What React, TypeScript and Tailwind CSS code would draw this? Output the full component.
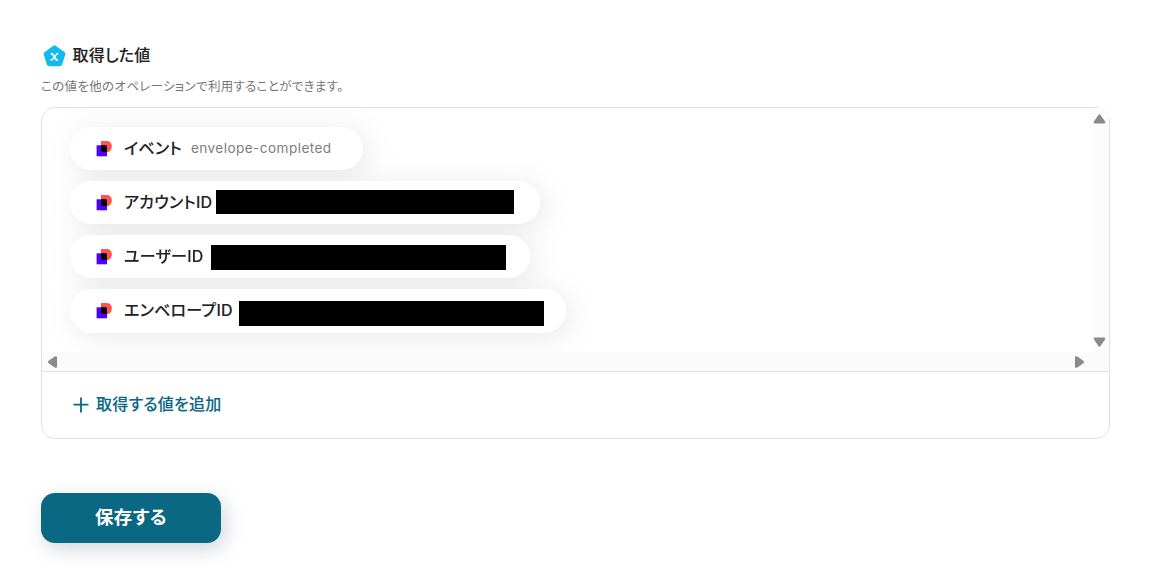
import type { ReactNode } from 'react';

type OutputValue = {
  label: string;
  value?: string;
  size: string;
  mask?: string;
};

const values: OutputValue[] = [
  { label: 'イベント', value: 'envelope-completed', size: 'w-[293px] h-[43px]' },
  { label: 'アカウントID', size: 'w-[470px] h-[43px]', mask: 'left-[146px] top-[9px] w-[298px] h-[24px]' },
  { label: 'ユーザーID', size: 'w-[460px] h-[43px]', mask: 'left-[141px] top-[10px] w-[295px] h-[25px]' },
  { label: 'エンベロープID', size: 'w-[496px] h-[44px]', mask: 'left-[169px] top-[12px] w-[305px] h-[25px]' },
];

function PentagonIcon() {
  return (
    <svg width="23" height="22" viewBox="0 0 23 22" className="shrink-0">
      <path
        d="M10 .9a2.5 2.5 0 0 1 3 0l8.3 6a2.5 2.5 0 0 1 .9 2.8l-3.1 9.7a2.5 2.5 0 0 1-2.4 1.8H6.3a2.5 2.5 0 0 1-2.4-1.8L.8 9.7a2.5 2.5 0 0 1 .9-2.8z"
        fill="#10b9ee"
      />
      <path d="M7.6 8.8h1.7l4 6h1.9" fill="none" stroke="#fff" strokeWidth="1.8" />
      <path d="M15.3 8.8h-1.4l-4.6 6H7.4" fill="none" stroke="#fff" strokeWidth="1.4" />
    </svg>
  );
}

function DocIcon() {
  return (
    <svg width="16" height="16" viewBox="0 0 16 16" className="shrink-0">
      <path d="M5 0h5.8a5 5 0 0 1 5 5c0 3.5-1.8 6-4.4 6H5z" fill="#ff5252" />
      <path d="M.6 4.3H11v11H.6z" fill="#4c00ff" />
      <path d="M5 4.3h3.5A2.5 2.5 0 0 1 11 6.8V11H7a2 2 0 0 1-2-2z" fill="#000" />
    </svg>
  );
}

function Arrow({ className }: { className: string }) {
  return (
    <svg width="13" height="10" viewBox="0 0 14 10" preserveAspectRatio="none" className={className}>
      <path d="M6 .8a1.3 1.3 0 0 1 2 0l4.8 6.4c.8 1.1.3 2.4-1 2.4H2.2c-1.3 0-1.8-1.3-1-2.4z" fill="#8b8b8b" />
    </svg>
  );
}

function ValuePill({ item, children }: { item: OutputValue; children?: ReactNode }) {
  return (
    <li className={`relative flex items-center rounded-full bg-white pl-[26px] ${item.size}`}>
      <DocIcon />
      <span className="ml-3 pb-[2px] text-[16px] leading-6 font-medium tracking-[0.25px] text-[#222] [-webkit-text-stroke:0.1px_#222]">{item.label}</span>
      {item.value && <span className="ml-[9px] pb-px text-[13.6px] leading-5 tracking-[0.43px] text-[#7d7d7d]">{item.value}</span>}
      {children}
    </li>
  );
}

export default function App() {
  return (
    <main className="h-[577px] w-[1156px] overflow-hidden bg-white pt-[44px] pl-[41px] font-['Inter','Noto_Sans_CJK_JP',sans-serif] [font-feature-settings:'palt']">
      <header>
        <div className="flex h-[23px] items-center gap-[6.5px] pl-[2px]">
          <PentagonIcon />
          <h1 className="pb-[2px] text-[16px] leading-6 font-medium tracking-[0.25px] text-[#222] [-webkit-text-stroke:0.1px_#222]">取得した値</h1>
        </div>
        <p className="mt-[11px] h-[29px] text-[12.5px] leading-[18px] tracking-[0.33px] text-[#777]">この値を他のオペレーションで利用することができます。</p>
      </header>

      <section className="h-[332px] w-[1069px] rounded-[14px] border border-[#e2e2e2]">
        <div className="grid h-[264px] grid-cols-[1048px_19px] grid-rows-[244px_19px] border-b border-[#e2e2e2]">
          <div className="overflow-hidden rounded-tl-[13px] pt-[19px] pl-[28px]">
            <ul className="flex flex-col gap-[11px] drop-shadow-[4px_4px_14px_rgba(0,0,0,0.09)]">
              {values.map((item) => (
                <ValuePill key={item.label} item={item}>
                  {item.mask && <span className={`absolute bg-black ${item.mask}`} />}
                </ValuePill>
              ))}
            </ul>
          </div>
          {/* Scrollbars */}
          <div className="flex flex-col items-center justify-between bg-[#fcfcfc] pt-[6px] pb-[5px]">
            <Arrow className="" />
            <Arrow className="rotate-180" />
          </div>
          <div className="flex items-center justify-between bg-[#fbfbfb] pr-[4px] pl-[4px]">
            <Arrow className="-rotate-90" />
            <Arrow className="rotate-90" />
          </div>
          <div className="bg-[#fbfbfb]" />
        </div>
        <button className="flex h-[65px] items-center gap-[7px] pl-[31px] text-[16px] font-medium tracking-[0.25px] text-[#0a6882] [-webkit-text-stroke:0.1px_#0a6882]">
          <svg width="16" height="16" viewBox="0 0 16 16">
            <path d="M8 .5v15M.5 7.6h15" stroke="currentColor" strokeWidth="1.8" />
          </svg>
          <span className="pb-px">取得する値を追加</span>
        </button>
      </section>

      <button className="mt-[54px] flex h-[50px] w-[180px] items-center justify-center rounded-[14px] bg-[#0a6882] text-[18.4px] font-bold tracking-[0.4px] text-white shadow-[4px_6px_20px_rgba(20,50,65,0.2)]">
        保存する
      </button>
    </main>
  );
}
